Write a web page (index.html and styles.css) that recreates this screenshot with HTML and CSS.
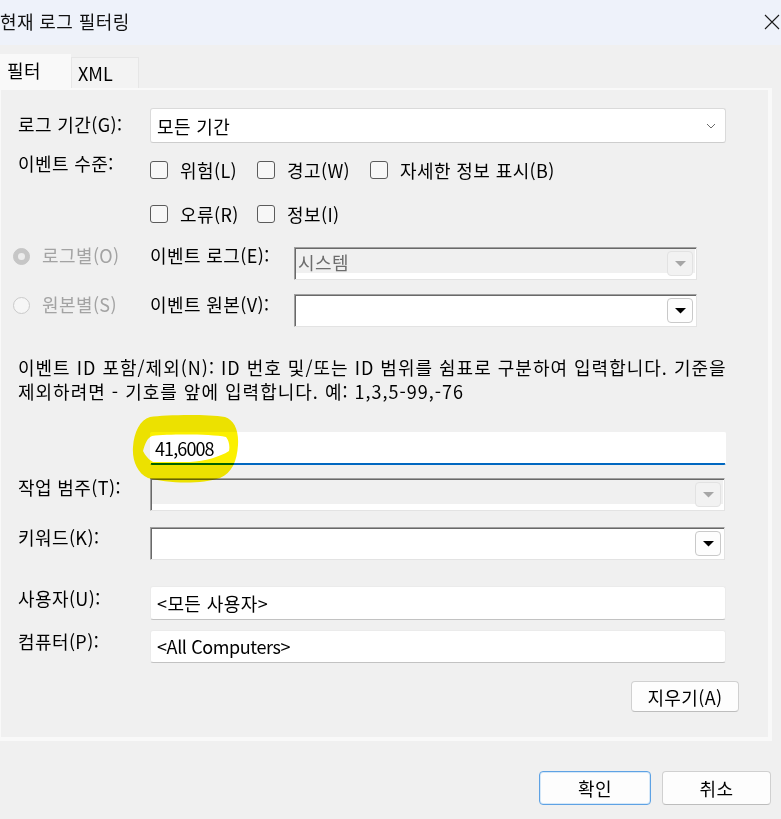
FILE: index.html
```html
<!DOCTYPE html>
<html lang="ko">
<head>
<meta charset="utf-8">
<title>현재 로그 필터링</title>
<link rel="stylesheet" href="styles.css">
</head>
<body>
<div class="window">
  <header class="titlebar">
    <span class="title">현재 로그 필터링</span>
    <svg class="close" viewBox="0 0 16 16" width="16" height="16"><path d="M1 1 L15 15 M15 1 L1 15" stroke="#1a1a1a" stroke-width="1.1" fill="none"/></svg>
  </header>

  <nav class="tabs">
    <div class="tab tab-active">필터</div>
    <div class="tab tab-xml">XML</div>
  </nav>

  <section class="panel">
    <div class="row row-period">
      <span class="lbl lbl-period">로그 기간(G):</span>
      <div class="select">
        <span class="select-text">모든 기간</span>
        <svg class="chev" viewBox="0 0 10 6" width="10" height="6"><polyline points="1,1 5,5 9,1" fill="none" stroke="#6a6a6a" stroke-width="1"/></svg>
      </div>
    </div>

    <div class="row row-level">
      <span class="lbl">이벤트 수준:</span>
      <div class="checks">
        <label class="check"><span class="cb"></span>위험(L)</label>
        <label class="check"><span class="cb"></span>경고(W)</label>
        <label class="check"><span class="cb"></span>자세한 정보 표시(B)</label>
        <label class="check"><span class="cb"></span>오류(R)</label>
        <label class="check"><span class="cb"></span>정보(I)</label>
      </div>
    </div>

    <div class="row row-log">
      <div class="radio-group"><span class="radio radio-on"></span><span class="dis">로그별(O)</span></div>
      <span class="lbl2">이벤트 로그(E):</span>
      <div class="combo combo-short combo-disabled combo-log">
        <span class="combo-text muted">시스템</span>
        <span class="dd dd-disabled"><svg viewBox="0 0 11 6" width="11" height="6"><polygon points="0,0 11,0 5.5,5.5" fill="#a6a6a6"/></svg></span>
      </div>
    </div>

    <div class="row row-source">
      <div class="radio-group"><span class="radio"></span><span class="dis">원본별(S)</span></div>
      <span class="lbl2">이벤트 원본(V):</span>
      <div class="combo combo-short combo-src">
        <span class="combo-text"></span>
        <span class="dd"><svg viewBox="0 0 11 6" width="11" height="6"><polygon points="0,0 11,0 5.5,5.5" fill="#000"/></svg></span>
      </div>
    </div>

    <p class="desc">이벤트 ID 포함/제외(N): ID 번호 및/또는 ID 범위를 쉼표로 구분하여 입력합니다. 기준을<br>제외하려면 - 기호를 앞에 입력합니다. 예: 1,3,5-99,-76</p>

    <div class="row row-id">
      <div class="input input-focus">41,6008</div>
    </div>

    <div class="row row-task">
      <span class="lbl">작업 범주(T):</span>
      <div class="combo combo-wide combo-disabled combo-task">
        <span class="combo-text"></span>
        <span class="dd dd-disabled"><svg viewBox="0 0 11 6" width="11" height="6"><polygon points="0,0 11,0 5.5,5.5" fill="#a6a6a6"/></svg></span>
      </div>
    </div>

    <div class="row row-key">
      <span class="lbl">키워드(K):</span>
      <div class="combo combo-wide combo-key">
        <span class="combo-text"></span>
        <span class="dd"><svg viewBox="0 0 11 6" width="11" height="6"><polygon points="0,0 11,0 5.5,5.5" fill="#000"/></svg></span>
      </div>
    </div>

    <div class="row row-user">
      <span class="lbl">사용자(U):</span>
      <div class="input">&lt;모든 사용자&gt;</div>
    </div>

    <div class="row row-comp">
      <span class="lbl">컴퓨터(P):</span>
      <div class="input input-comp">&lt;All Computers&gt;</div>
    </div>

    <div class="row row-clear">
      <button class="btn btn-clear" type="button">지우기(A)</button>
    </div>
  </section>

  <footer class="actions">
    <button class="btn btn-ok" type="button">확인</button>
    <button class="btn btn-cancel" type="button">취소</button>
  </footer>

  <svg class="marker" viewBox="0 0 130 90" width="130" height="90">
    <path fill-rule="evenodd" fill="#fbf000" d="M30,12 C45,10 85,9 105,12 C114,15 119,25 118,40 C117,56 112,68 100,73 C80,80 45,78 28,73 C17,68 12,55 13,42 C14,27 20,15 30,12 Z M23,46 C25,39 27,33 32,31 C50,29 90,29 106,32 C109,36 110,41 109,46 C100,52 85,56 70,57 L33,57 C29,55 25,50 23,46 Z"/>
  </svg>
</div>
</body>
</html>
```

FILE: styles.css
```css
* {
  box-sizing: border-box;
}

html,
body {
  margin: 0;
  padding: 0;
}

body {
  width: 781px;
  height: 819px;
  overflow: hidden;
  background: #f0f0f0;
  color: #000;
  font-family: "Noto Sans CJK KR", "Noto Sans", sans-serif;
  font-size: 18px;
  line-height: 24px;
  letter-spacing: 0.4px;
}

.window {
  position: relative;
  width: 781px;
  height: 819px;
}

/* title bar */
.titlebar {
  height: 45px;
  background: #eef2fa;
  display: flex;
  align-items: center;
  justify-content: space-between;
}

.title {
  margin-top: -3px;
  color: #111;
}

.close {
  margin-right: 1px;
  margin-top: -1px;
}

/* tabs */
.tabs {
  height: 43px;
  display: flex;
  align-items: flex-end;
}

.tab {
  padding: 4px 0 0 7px;
}

.tab-active {
  width: 71px;
  height: 34px;
  background: #f9f9f9;
}

.tab-xml {
  width: 68px;
  height: 31px;
  background: #f3f3f3;
  border: 1px solid #e6e6e6;
  border-bottom: none;
  padding: 3px 0 0 6px;
  letter-spacing: 0;
}

/* panel */
.panel {
  width: 772px;
  height: 653px;
  border-style: solid;
  border-color: #f9f9f9;
  border-width: 2px 4px 4px 1px;
  padding: 18px 29px 0 12px;
}

.row {
  display: flex;
  align-items: flex-start;
}

.lbl {
  width: 137px;
  flex: none;
  padding-left: 5px;
}

.lbl-period {
  margin-top: 4px;
}

/* select */
.select {
  width: 576px;
  height: 35px;
  background: #fff;
  border: 1px solid #dadada;
  border-bottom-color: #cdcdcd;
  border-radius: 3px;
  display: flex;
  align-items: center;
  justify-content: space-between;
  padding: 0 9px 0 6px;
}

.chev {
  display: block;
}

/* checkboxes */
.row-level {
  margin-top: 8px;
}

.checks {
  margin-top: 7px;
  display: grid;
  grid-template-columns: 107px 113px auto;
  row-gap: 20px;
}

.check {
  display: flex;
  align-items: center;
  height: 24px;
  white-space: nowrap;
}

.cb {
  width: 18px;
  height: 18px;
  flex: none;
  border: 1px solid #5b5b5b;
  border-radius: 3px;
  background: #f7f7f7;
  margin-right: 12px;
}

/* radios */
.row-log {
  margin-top: 17px;
}

.row-source {
  margin-top: 12px;
}

.radio-group {
  width: 137px;
  flex: none;
  display: flex;
  align-items: flex-start;
}

.radio {
  width: 17px;
  height: 17px;
  flex: none;
  margin-top: 5px;
  margin-right: 12px;
  border-radius: 50%;
  border: 1px solid #cacaca;
  background: #f6f6f6;
  display: flex;
  align-items: center;
  justify-content: center;
}

.radio-on {
  background: #c6c6c6;
  border-color: #c6c6c6;
}

.radio-on::after {
  content: "";
  width: 7px;
  height: 7px;
  border-radius: 50%;
  background: #ececec;
}

.dis {
  color: #a3a3a3;
}

.lbl2 {
  width: 144px;
  flex: none;
}

/* classic combo boxes */
.combo {
  height: 33px;
  display: flex;
  align-items: center;
  justify-content: space-between;
  background: #fff;
  border: 1px solid;
  border-color: #a0a0a0 #e3e3e3 #e3e3e3 #a0a0a0;
  box-shadow: inset 1px 1px 0 #696969, inset -1px -1px 0 #fff;
  padding: 0 3px 0 2px;
}

.combo-disabled {
  background: linear-gradient(to bottom, #f0f0f0 calc(100% - 6px), #fff calc(100% - 6px));
}

.combo-short {
  width: 403px;
}

.combo-wide {
  width: 575px;
}

.combo-log {
  margin-top: 4px;
}

.combo-src {
  margin-top: 2px;
}

.combo-task {
  margin-top: 3px;
}

.combo-key {
  margin-top: 2px;
}

.combo-text {
  padding-left: 1px;
  margin-top: -3px;
}

.muted {
  color: #6d6d6d;
}

.dd {
  width: 26px;
  height: 25px;
  flex: none;
  border: 1px solid #c9c9c9;
  border-radius: 4px;
  background: #fdfdfd;
  display: flex;
  align-items: center;
  justify-content: center;
  padding-top: 1px;
}

.dd svg {
  display: block;
}

.dd-disabled {
  border-color: #e2e2e2;
  background: #f2f2f2;
}

/* description */
.desc {
  margin: 28px 0 0 0;
  padding-left: 5px;
  white-space: nowrap;
  letter-spacing: 1px;
}

/* inputs */
.row-id {
  margin-top: 29px;
}

.input {
  width: 576px;
  height: 34px;
  background: #fff;
  border: 1px solid #ebebeb;
  border-bottom-color: #c2c2c2;
  border-radius: 3px;
  padding: 4px 0 0 6px;
}

.input-focus {
  margin-left: 137px;
  height: 33px;
  border-color: #fff;
  border-bottom: 2px solid #0067c0;
  border-radius: 2px;
  padding: 3px 0 0 4px;
  letter-spacing: -0.9px;
}

.row-task {
  margin-top: 10px;
}

.row-key {
  margin-top: 14px;
}

.row-user {
  margin-top: 26px;
}

.row-comp {
  margin-top: 9px;
}

.input-comp {
  margin-top: 1px;
  height: 33px;
  padding-top: 3px;
  letter-spacing: -0.4px;
}

/* buttons */
.btn {
  font-family: inherit;
  font-size: 18px;
  line-height: 24px;
  letter-spacing: inherit;
  color: #000;
  background: #fdfdfd;
  border: 1px solid #d0d0d0;
  border-bottom-color: #bdbdbd;
  border-radius: 4px;
  padding: 0;
  margin: 0;
}

.row-clear {
  margin-top: 18px;
  justify-content: flex-end;
}

.btn-clear {
  width: 108px;
  height: 31px;
}

.actions {
  margin-top: 30px;
  display: flex;
  justify-content: flex-end;
  gap: 11px;
  padding-right: 10px;
}

.btn-ok {
  width: 112px;
  height: 34px;
  border: 1px solid #5ea2e4;
  box-shadow: inset 0 0 0 1px #d6e8f8;
}

.btn-cancel {
  width: 109px;
  height: 34px;
}

/* hand-drawn highlighter annotation */
.marker {
  position: absolute;
  left: 120px;
  top: 405px;
  mix-blend-mode: multiply;
  pointer-events: none;
}
```
